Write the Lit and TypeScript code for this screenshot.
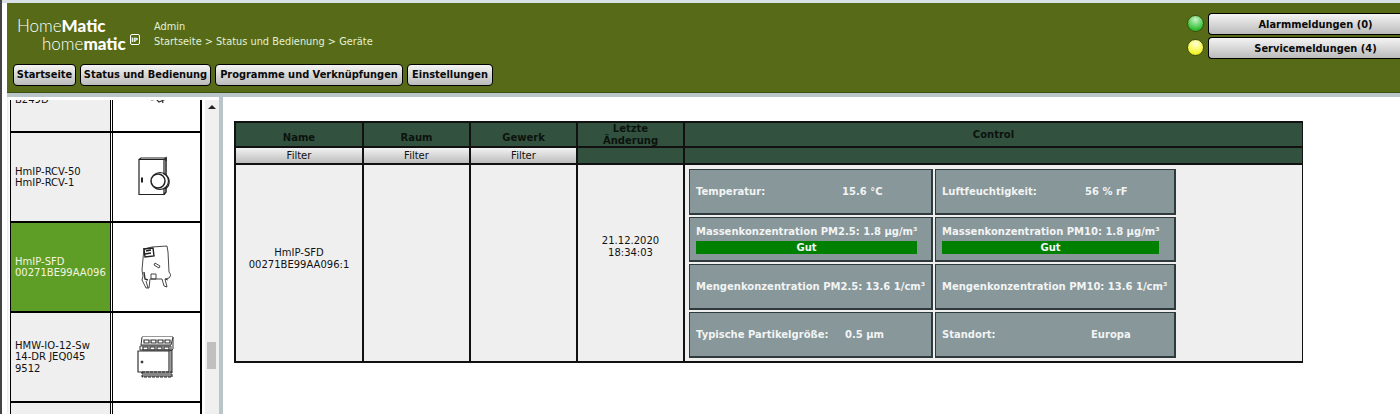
import { LitElement, html, css, svg } from "lit";
import { customElement } from "lit/decorators.js";

const rcvIcon = svg`<svg width="40" height="42" viewBox="0 0 40 42" fill="none" stroke="#222" stroke-width="1.2">
<path d="M3 3.5h25v35H3z" fill="#fff"/><path d="M3 3.5l2-1.5h25v3" /><path d="M28 3.5l2-1.5v34l-2 2.500" stroke-width="1.500"/>
<circle cx="24" cy="25" r="8.500" fill="#fff"/><path d="M27 17.500a8.500 8.500 0 0 1 2 15.500"/><circle cx="22" cy="25" r="7" fill="#fff" stroke-width="1.500"/>
<path d="M6 21.500v5" stroke-width="2"/></svg>`;

const sfdIcon = svg`<svg width="30" height="44" viewBox="0 0 30 44" fill="none" stroke="#333" stroke-width="0.9">
<path d="M3 4l8-2 15-1 1 6 1 20 2 3-2 3-4 1 2 8-3-1-2-7H9l-1 9-3 0-4-8 1-4-1-6 2-22z" fill="#fff"/>
<path d="M3 4l9-1 1 8-9 1z M5 6l5-1 M4 9l6-1" stroke="#222" stroke-width="1.400"/>
<path d="M14 18l5 3-1 2-5-3z"/><path d="M10 29h5v5h-5z"/><path d="M3 27l1 7 3 1" stroke-width="1.400"/><path d="M5 36l2 7 M24 34l3 1"/></svg>`;

const railIcon = svg`<svg width="38" height="42" viewBox="0 0 38 42" fill="none" stroke="#333" stroke-width="1">
<path d="M5 1h31v12l-2 2v24H7v-2l-3-1" fill="#fff"/>
<path d="M5 1l-1 8h30l2-8" fill="#fff"/><path d="M7 4h5v3H7zM14 4h5v3h-5zM21 4h5v3h-5zM28 4h5v3h-5z" stroke-width="1.200"/>
<path d="M3 10h31v4H3z" fill="#fff"/><path d="M6 11h5v3H6zM13 11h5v3h-5zM20 11h5v3h-5zM27 11h5v3h-5z" stroke-width="1.200"/>
<path d="M1 15h31v21H1z" fill="#fff" stroke-width="1.200"/><path d="M32 15l3-1v22l-3 1" />
<circle cx="5" cy="26" r="1" fill="#222"/><path d="M5 36h30v5H5z" fill="#888" stroke="#222" stroke-dasharray="3 1"/></svg>`;

const topIcon = svg`<svg width="26" height="10" viewBox="0 0 26 10" fill="none" stroke="#333" stroke-width="1.200"><path d="M0 2l9 3 4-1 3 3 5-2-1-5M4 1l6 4 M18 1l2 7"/></svg>`;

@customElement("app-root")
export class AppRoot extends LitElement {
  static styles = css`
    :host { display: block; height: 414px; overflow: hidden; background: #fff; font-family: "DejaVu Sans", Verdana, sans-serif; font-size: 10px; color: #000; }
    * { box-sizing: border-box; }
    .page { height: 414px; display: flex; border-left: 2px solid #444; padding: 3px 0 0 5px; position: relative; }
    .topline { position: absolute; left: 0; right: 0; top: 0; height: 3px; background: #d9e0e6; }
    .main { flex: 1; min-width: 0; display: flex; flex-direction: column; }
    header { height: 90px; background: #566a18; border-bottom: 1px solid #3f5210; display: flex; justify-content: space-between; flex: none; }
    .hleft { padding: 14px 0 0 6px; display: flex; flex-direction: column; }
    .brand { display: flex; height: 47px; }
    .logo { width: 141px; padding-left: 4px; color: #fff; font-family: "Lato", sans-serif; font-size: 17px; line-height: 18px; font-weight: 300; }
    .logo b { font-weight: 900; }
    .logo .l2 { padding-left: 25px; display: flex; align-items: flex-start; }
    .ip { width: 10px; height: 11px; margin: -1px 0 0 4px; border: 1px solid #fff; border-radius: 2px; font: bold 6px/9px "DejaVu Sans", sans-serif; text-align: center; }
    .crumbs { color: #e2f2d8; line-height: 15px; padding-top: 2px; font-size: 9.800px; }
    .nav { display: flex; gap: 4px; }
    .btn { height: 22px; border: 1px solid #000; border-radius: 4px; background: linear-gradient(#f4f4f4, #bbb); font-weight: bold; font-size: 9.850px; line-height: 20px; text-align: center; white-space: nowrap; color: #0a0a0a; }
    .b1 { width: 63px; }
    .b2 { width: 131px; }
    .b3 { width: 188px; }
    .b4 { width: 86px; }
    .hright { width: 213px; padding-top: 10px; display: grid; grid-template-columns: 21px 1fr; row-gap: 2px; align-content: start; }
    .led { width: 17px; height: 17px; margin: 2px 0 0 0; border-radius: 50%; border: 1px solid #3c4f12; }
    .led.g { background: radial-gradient(circle at 50% 25%, #c8f5c8, #35c035 70%, #18a018); }
    .led.y { background: radial-gradient(circle at 50% 25%, #ffffd8, #f5f530 70%, #d0d000); }
    .hright .btn { border-right: 0; border-radius: 4px 0 0 4px; padding-left: 22px; line-height: 21px; }
    .band { height: 4px; background: #b8c6c9; flex: none; }
    .body { flex: 1; min-height: 0; display: flex; }
    .side { width: 212px; flex: none; display: flex; padding: 3px 0 0 3px; overflow: hidden; background: linear-gradient(90deg, #e8edee, #fff 3px); }
    .listclip { width: 192px; overflow: hidden; height: 100%; flex: none; }
    .list { margin-top: -57px; }
    .row { height: 90px; display: grid; grid-template-columns: 100px 90px; gap: 0 2px; border-bottom: 2px solid #000; }
    .row .name { background: #efefef; border-left: 1px solid #000; padding-left: 4px; display: flex; flex-direction: column; justify-content: center; line-height: 11.500px; font-size: 10px; color: #111; box-shadow: 1px 0 0 #000; white-space: nowrap; }
    .row .pic { border-right: 2px solid #000; border-left: 1px solid #000; display: flex; align-items: center; justify-content: center; padding-right: 2px; background: #fff; }
    .row.sel .name { background: #5f9e26; color: #f4f4e0; }
    .row.top .name { justify-content: flex-end; padding-bottom: 26px; }
    .row.top .pic { align-items: flex-end; padding-bottom: 26px; }
    .sb { width: 15px; margin: 0 0 0 3px; background: #f0f0f0; flex: none; position: relative; }
    .sb .up { position: absolute; left: 3px; top: 5px; width: 0; height: 0; border: 4px solid transparent; border-top: 0; border-bottom: 4px solid #222; }
    .sb .thumb { position: absolute; left: 2px; top: 242px; width: 9px; height: 27px; background: #c0c0c0; }
    .vband { width: 4px; flex: none; background: #b8c6c9; }
    .content { flex: 1; padding: 24px 0 0 11px; background: #fff; }
    .table { width: 1069px; height: 242px; background: #111; padding: 2px; display: grid; grid-template-columns: 126px 105px 105px 105px 617px; grid-template-rows: 23px 15px 196px; gap: 2px; }
    .th { background: #32523f; font-weight: bold; font-size: 10px; line-height: 12px; text-align: center; display: flex; align-items: flex-end; justify-content: center; color: #0c120e; padding-bottom: 2px; }
    .th.ctl, .th.mid { align-items: center; padding-bottom: 0; }
    .filter { background: linear-gradient(#f2f2f2, #bdbdbd); text-align: center; font-size: 10px; line-height: 15px; color: #111; }
    .fill { background: #32523f; }
    .td { background: #efefef; display: flex; align-items: center; justify-content: center; text-align: center; font-size: 10px; line-height: 12px; color: #111; padding-bottom: 8px; }
    .td.date { padding-bottom: 32px; }
    .ctlcell { background: #efefef; padding: 4px 0 0 4px; }
    .tiles { display: grid; grid-template-columns: 244px 241px; grid-template-rows: 46px 45px 46px 46px; gap: 2px; }
    .tile { background: #87979a; border: 1px solid #2e3a3c; border-width: 1px 2px 2px 1px; padding: 0 6px; color: #f2f4f4; font-weight: bold; font-size: 10px; display: flex; flex-direction: column; justify-content: center; line-height: 14px; white-space: nowrap; }
    .kv { display: grid; }
    .gut { height: 13px; background: #008000; color: #f2f4f4; text-align: center; line-height: 13px; margin-top: 2px; }
  `;

  private tile(k: string, v: string, w: number) {
    return html`<div class="tile"><div class="kv" style="grid-template-columns:${w}px auto"><span>${k}</span><span>${v}</span></div></div>`;
  }

  private bar(t: string, w: number) {
    return html`<div class="tile"><div>${t}</div><div class="gut" style="width:${w}px">Gut</div></div>`;
  }

  render() {
    return html`<div class="page"><div class="topline"></div><div class="main">
      <header>
        <div class="hleft">
          <div class="brand">
            <div class="logo"><div>Home<b>Matic</b></div><div class="l2"><span>home<b>matic</b></span><span class="ip">IP</span></div></div>
            <div class="crumbs"><div>Admin</div><div>Startseite &gt; Status und Bedienung &gt; Geräte</div></div>
          </div>
          <div class="nav"><div class="btn b1">Startseite</div><div class="btn b2">Status und Bedienung</div><div class="btn b3">Programme und Verknüpfungen</div><div class="btn b4">Einstellungen</div></div>
        </div>
        <div class="hright">
          <div class="led g"></div><div class="btn">Alarmmeldungen (0)</div>
          <div class="led y"></div><div class="btn">Servicemeldungen (4)</div>
        </div>
      </header>
      <div class="band"></div>
      <div class="body">
        <div class="side">
          <div class="listclip"><div class="list">
            <div class="row top"><div class="name"><div>B249D</div></div><div class="pic">${topIcon}</div></div>
            <div class="row"><div class="name"><div>HmIP-RCV-50</div><div>HmIP-RCV-1</div></div><div class="pic">${rcvIcon}</div></div>
            <div class="row sel"><div class="name"><div>HmIP-SFD</div><div>00271BE99AA096</div></div><div class="pic">${sfdIcon}</div></div>
            <div class="row"><div class="name"><div>HMW-IO-12-Sw</div><div>14-DR JEQ045</div><div>9512</div></div><div class="pic">${railIcon}</div></div>
            <div class="row"><div class="name"></div><div class="pic"></div></div>
          </div></div>
          <div class="sb"><div class="up"></div><div class="thumb"></div></div>
        </div>
        <div class="vband"></div>
        <div class="content">
          <div class="table">
            <div class="th">Name</div><div class="th">Raum</div><div class="th">Gewerk</div><div class="th mid">Letzte<br />Änderung</div><div class="th ctl">Control</div>
            <div class="filter">Filter</div><div class="filter">Filter</div><div class="filter">Filter</div><div class="fill"></div><div class="fill"></div>
            <div class="td">HmIP-SFD<br />00271BE99AA096:1</div><div class="td"></div><div class="td"></div><div class="td date">21.12.2020<br />18:34:03</div>
            <div class="ctlcell"><div class="tiles">
              ${this.tile("Temperatur:", "15.6 °C", 146)}
              ${this.tile("Luftfeuchtigkeit:", "56 % rF", 143)}
              ${this.bar("Massenkonzentration PM2.5: 1.8 µg/m³", 221)}
              ${this.bar("Massenkonzentration PM10: 1.8 µg/m³", 217)}
              ${this.tile("Mengenkonzentration PM2.5: 13.6 1/cm³", "", 230)}
              ${this.tile("Mengenkonzentration PM10: 13.6 1/cm³", "", 226)}
              ${this.tile("Typische Partikelgröße:", "0.5 µm", 149)}
              ${this.tile("Standort:", "Europa", 149)}
            </div></div>
          </div>
        </div>
      </div>
    </div></div>`;
  }
}
